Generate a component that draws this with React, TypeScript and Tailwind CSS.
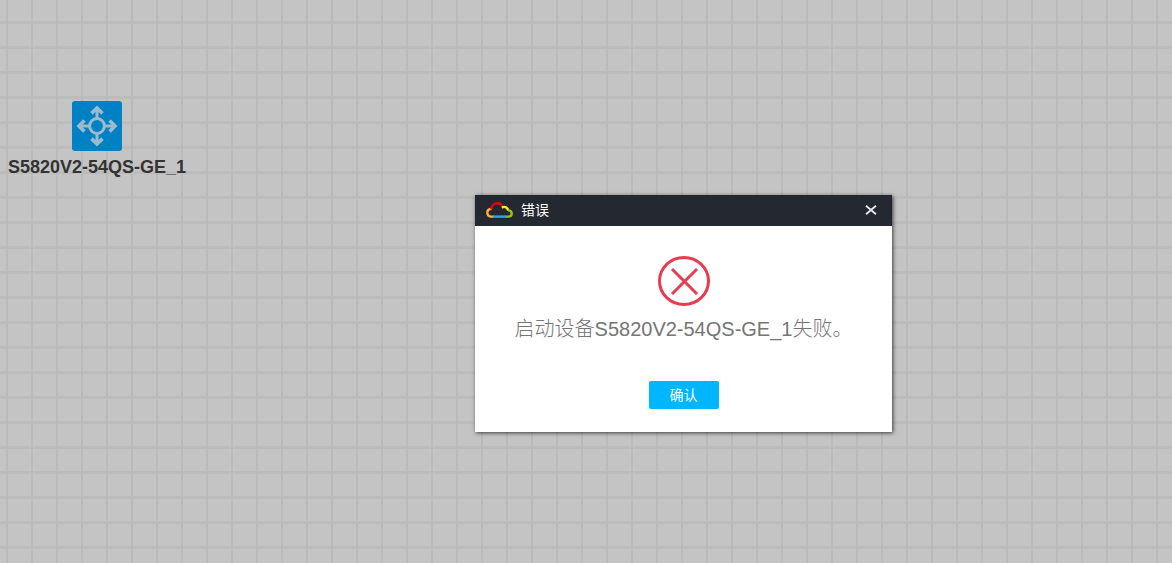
import { useState } from 'react';

const fontStack = "font-['Liberation_Sans','Noto_Sans_CJK_SC',sans-serif]";

function SwitchIcon() {
  return (
    <svg viewBox="0 0 50 50" className="w-[50px] h-[50px]" aria-hidden="true">
      <rect width="50" height="50" rx="3" fill="#0080c5" />
      <g fill="none" stroke="#9dbbcb" strokeWidth="2.6">
        <circle cx="25" cy="25" r="7.4" strokeWidth="3" />
        <path d="M25 17.5V8M25 32.5V42M17.5 25H8M32.5 25H42" strokeWidth="3" />
        <path d="M19.5 12.4L25 7L30.5 12.4M19.5 37.6L25 43L30.5 37.6" strokeWidth="3.6" />
        <path d="M12.4 19.5L7 25L12.4 30.5M37.6 19.5L43 25L37.6 30.5" strokeWidth="3.6" />
      </g>
    </svg>
  );
}

function CloudLogo() {
  return (
    <svg viewBox="0 0 27 16" className="w-[27px] h-[16px]" fill="none" strokeWidth="2.4" aria-hidden="true">
      <path d="M7.5 14.6H5.2C3 14.6 1.3 13 1.3 10.8C1.3 8.5 3 7 5.6 6.8" stroke="#f9b233" />
      <path d="M5.3 7.2C5.5 3.7 8.3 1.3 11.5 1.3C14.3 1.3 16.2 2.8 17.2 5" stroke="#e60012" />
      <path d="M15.8 5.6C18.8 4 22 5.4 22.2 8.6" stroke="#fff100" />
      <path d="M22 8.4C24.4 8.4 25.7 9.8 25.7 11.5C25.7 13.4 24.2 14.6 22.2 14.6H19.5" stroke="#8fc31f" />
      <path d="M7 14.6H20" stroke="#2ea7e0" />
    </svg>
  );
}

function ErrorIcon() {
  return (
    <svg viewBox="0 0 52 50" className="w-[52px] h-[50px]" fill="none" stroke="#e73c50" strokeWidth="3" aria-hidden="true">
      <ellipse cx="26" cy="25" rx="24.5" ry="23.5" />
      <path d="M14 13L39 38M39 13L14 38" />
    </svg>
  );
}

interface DeviceNodeProps {
  name: string;
}

function DeviceNode({ name }: DeviceNodeProps) {
  return (
    <div className="absolute left-1 top-[101px] w-[186px] flex flex-col items-center gap-1">
      <SwitchIcon />
      <span className="text-lg leading-6 font-bold text-[#333333] whitespace-nowrap">{name}</span>
    </div>
  );
}

interface ErrorDialogProps {
  title: string;
  message: string;
  onClose: () => void;
}

function ErrorDialog({ title, message, onClose }: ErrorDialogProps) {
  return (
    <div
      role="alertdialog"
      aria-labelledby="dialog-title"
      aria-describedby="dialog-message"
      className="absolute left-[475px] top-[195px] w-[417px] bg-white shadow-[1px_1px_4px_rgba(0,0,0,0.7)]"
    >
      <div className="h-[31px] pl-[11px] pr-3 pb-px flex items-center gap-2 bg-[#242830]">
        <CloudLogo />
        <h1 id="dialog-title" className="flex-1 text-sm leading-5 text-white">
          {title}
        </h1>
        <button onClick={onClose} aria-label="关闭" className="w-[18px] h-[18px] flex items-center justify-center">
          <svg viewBox="0 0 12 10" className="w-3 h-[10px]" stroke="#e9e9ea" strokeWidth="1.8" fill="none">
            <path d="M1 0.7L11 9.3M11 0.7L1 9.3" />
          </svg>
        </button>
      </div>
      <div className="flex flex-col items-center pt-[30px] pb-[23px]">
        <ErrorIcon />
        <p id="dialog-message" className="mt-2 mb-[37px] text-xl leading-[30px] font-light text-[#757575]">
          {message}
        </p>
        <button
          onClick={onClose}
          className="w-[70px] h-7 rounded-xs bg-[#00b7ff] text-sm leading-5 text-white"
        >
          确认
        </button>
      </div>
    </div>
  );
}

export default function App() {
  const [open, setOpen] = useState(true);

  return (
    <main
      className={`relative min-h-screen overflow-hidden bg-[#c4c4c4] bg-[linear-gradient(to_right,transparent_6px,#bababa_6px,#bababa_8px,transparent_8px),linear-gradient(to_bottom,transparent_21px,#bcbcbc_21px,#bcbcbc_24px,transparent_24px)] bg-[size:25px_25px] ${fontStack}`}
    >
      <DeviceNode name="S5820V2-54QS-GE_1" />
      {open && (
        <ErrorDialog
          title="错误"
          message="启动设备S5820V2-54QS-GE_1失败。"
          onClose={() => setOpen(false)}
        />
      )}
    </main>
  );
}
